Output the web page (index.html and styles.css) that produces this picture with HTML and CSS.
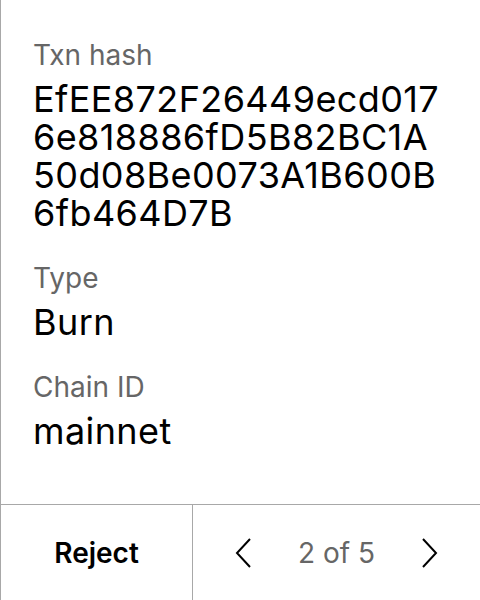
FILE: index.html
```html
<!DOCTYPE html>
<html>
<head>
<meta charset="utf-8">
<link rel="stylesheet" href="styles.css">
</head>
<body>
<div class="card">
  <div class="details">
    <div class="field">
      <div class="label">Txn hash</div>
      <div class="value hash">EfEE872F26449ecd0176e818886fD5B82BC1A50d08Be0073A1B600B6fb464D7B</div>
    </div>
    <div class="field">
      <div class="label">Type</div>
      <div class="value">Burn</div>
    </div>
    <div class="field">
      <div class="label">Chain ID</div>
      <div class="value">mainnet</div>
    </div>
  </div>
  <div class="footer">
    <div class="reject">Reject</div>
    <div class="pager">
      <svg class="chev" width="16" height="30" viewBox="0 0 16 30"><polyline points="15,1 2,15 15,29" fill="none" stroke="#000" stroke-width="2"/></svg>
      <span class="count">2 of 5</span>
      <svg class="chev" width="16" height="30" viewBox="0 0 16 30"><polyline points="1,1 14,15 1,29" fill="none" stroke="#000" stroke-width="2"/></svg>
    </div>
  </div>
</div>
</body>
</html>
```
FILE: styles.css
```css
html, body {
  margin: 0;
  padding: 0;
  background: #fff;
}
body {
  font-family: Inter, "Noto Sans", sans-serif;
  color: #000;
}
.card {
  width: 479px;
  height: 600px;
  border-left: 1px solid #a8a8a8;
  display: flex;
  flex-direction: column;
}
.details {
  flex: 1;
  padding: 39px 38px 0 32px;
  display: flex;
  flex-direction: column;
  gap: 30px;
}
.label {
  font-size: 28px;
  line-height: 32px;
  color: #666;
}
.value {
  font-size: 36px;
  line-height: 38px;
  letter-spacing: 0.4px;
  margin-top: 9px;
}
.hash {
  word-break: break-all;
}
.footer {
  height: 95px;
  border-top: 1px solid #a8a8a8;
  display: grid;
  grid-template-columns: 191px 1fr;
}
.reject {
  display: flex;
  align-items: center;
  justify-content: center;
  font-size: 28px;
  font-weight: 600;
}
.pager {
  border-left: 1px solid #a8a8a8;
  display: flex;
  align-items: center;
  justify-content: center;
  gap: 47px;
}
.count {
  font-size: 28px;
  color: #666;
}
.chev {
  display: block;
}
```
